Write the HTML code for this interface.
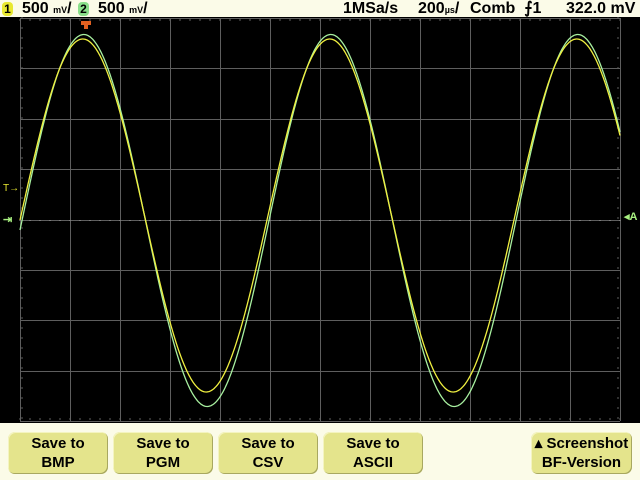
<!DOCTYPE html>
<html><head><meta charset="utf-8"><style>
body{margin:0;width:640px;height:480px;background:#000;overflow:hidden;font-family:"Liberation Sans",sans-serif;position:relative}
.top{position:absolute;left:0;top:0;width:640px;height:17px;background:#fbfbe8;font-size:16px;font-weight:bold;color:#000;line-height:17px}
.top span{position:absolute;top:0}
.bot{position:absolute;left:0;top:423px;width:640px;height:57px;background:#fbfbe8}
.btn{position:absolute;top:432px;height:42px;width:100px;background:#e4e48c;border-radius:7px;box-shadow:inset -1px -1px 0 #a8a860,inset 1px 1px 0 #f4f4c0;font-size:15px;font-weight:bold;text-align:center;line-height:19px;padding-top:2px;box-sizing:border-box}
.num{display:inline-block;width:11px;height:14px;border-radius:4px;color:#000;font-size:12px;line-height:14px;text-align:center}
</style></head><body>
<div class="top">
<span style="left:2px"><span class="num" style="position:static;background:#e8e830">1</span></span>
<span style="left:22px">500 <small style="font-size:9px">mV</small>/</span>
<span style="left:78px"><span class="num" style="position:static;background:#8adf8a">2</span></span>
<span style="left:98px">500 <small style="font-size:9px">mV</small>/</span>
<span style="left:343px">1MSa/s</span>
<span style="left:418px">200<small style="font-size:9px">µs</small>/</span>
<span style="left:470px">Comb &nbsp;⨍1</span>
<span style="left:566px">322.0 mV</span>
</div>
<svg style="position:absolute;left:0;top:0" width="640" height="423" id="s">
<g stroke="#5e5e5e" stroke-width="1" id="grid"></g>
<path d="M81 21h10v4h-3v4h-4v-4h-3z" fill="#e06020"/>
<text x="3" y="191" fill="#e8e830" font-size="10" font-family="Liberation Sans">T→</text>
<text x="3" y="223" fill="#a8f080" font-size="11" font-family="Liberation Sans" font-weight="bold">⇥</text>
<text x="624" y="220" fill="#a8f080" font-size="11" font-family="Liberation Sans" font-weight="bold">◂A</text>
<polyline id="g" fill="none" stroke="#a8f0a0" stroke-width="1.3"/>
<polyline id="y" fill="none" stroke="#f0f040" stroke-width="1.3"/>
</svg>
<div class="bot"></div>
<div class="btn" style="left:8px">Save to<br>BMP</div>
<div class="btn" style="left:113px">Save to<br>PGM</div>
<div class="btn" style="left:218px">Save to<br>CSV</div>
<div class="btn" style="left:323px">Save to<br>ASCII</div>
<div class="btn" style="left:531px;width:101px">▴ Screenshot<br>BF-Version</div>
<script>
var g=document.getElementById('grid'),h='';
for(var i=0;i<=12;i++){var x=20+i*50;h+='<line x1="'+(x+.5)+'" y1="18" x2="'+(x+.5)+'" y2="421"/>';}
for(var j=0;j<=8;j++){var y=Math.round(18+j*50.4)+.5;h+='<line x1="20" y1="'+y+'" x2="620" y2="'+y+'"/>';}
for(var x=20;x<=620;x+=10){h+='<line x1="'+x+'" y1="220" x2="'+x+'" y2="221" stroke="#999"/>';h+='<line x1="'+x+'" y1="19" x2="'+x+'" y2="21"/><line x1="'+x+'" y1="418" x2="'+x+'" y2="420"/>';}
for(var y=18;y<=421;y+=10){h+='<line x1="21" y1="'+y+'" x2="23" y2="'+y+'"/><line x1="617" y1="'+y+'" x2="619" y2="'+y+'"/>';}
g.innerHTML=h;
function wave(id,c,a,ph){var p='';for(var x=20;x<=620;x++){var y=c-a*Math.sin(2*Math.PI*(x-ph)/247);p+=x+','+y.toFixed(1)+' ';}document.getElementById(id).setAttribute('points',p);}
wave('g',220.5,186,22);
wave('y',215.5,176.5,21);
</script>
</body></html>
